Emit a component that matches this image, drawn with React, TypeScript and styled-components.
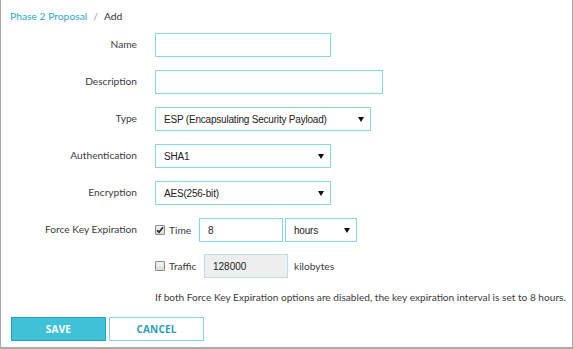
import React from "react";
import styled, { createGlobalStyle } from "styled-components";

const Global = createGlobalStyle`
  html, body { margin: 0; padding: 0; background: #fff; }
  body { width: 573px; height: 349px; overflow: hidden; }
  * { box-sizing: border-box; }
`;

const Frame = styled.div`
  width: 573px;
  height: 349px;
  border-left: 1px solid #a9a9a9;
  border-right: 1px solid #a9a9a9;
  border-bottom: 2px solid #a9a9a9;
  padding: 8px 0 0 9px;
  font-family: Lato, "Segoe UI", sans-serif;
  color: #3c3c3c;
  font-size: 10.2px;
`;

const Crumbs = styled.div`
  display: flex;
  gap: 6px;
  height: 16px;
  align-items: center;
  font-size: 10.3px;
  color: #333;
`;
const CrumbLink = styled.span`
  color: #2ea9cc;
`;
const Sep = styled.span`
  color: #999;
`;

const Form = styled.div`
  display: grid;
  grid-template-columns: 127px auto;
  column-gap: 18px;
  row-gap: 13px;
  margin-top: 9px;
  align-items: center;
`;

const Label = styled.div`
  text-align: right;
  font-size: 10.2px;
  color: #3c3c3c;
  margin-top: -2px;
`;

const Input = styled.div<{ w: number; disabled?: boolean }>`
  width: ${(p) => p.w}px;
  height: 24px;
  border: 1px solid ${(p) => (p.disabled ? "#b9dfe6" : "#86d8e6")};
  background: ${(p) => (p.disabled ? "#eeeeee" : "#fff")};
  font-family: "Liberation Sans", Arial, sans-serif;
  font-size: 10px;
  color: #222;
  display: flex;
  align-items: center;
  padding-left: 8px;
`;

const Select = styled.div<{ w: number }>`
  width: ${(p) => p.w}px;
  height: 24px;
  border: 1px solid #86d8e6;
  font-family: "Liberation Sans", Arial, sans-serif;
  font-size: 10px;
  letter-spacing: -0.2px;
  color: #222;
  display: flex;
  align-items: center;
  justify-content: space-between;
  padding: 0 6px 0 8px;
`;

const Arrow = styled.span`
  width: 0;
  height: 0;
  border-left: 3px solid transparent;
  border-right: 3px solid transparent;
  border-top: 5px solid #111;
  margin-top: 1px;
`;

const Inline = styled.div<{ shift?: number }>`
  display: flex;
  align-items: center;
  height: 24px;
  margin-top: ${(p) => p.shift ?? 0}px;
`;

const Check = styled.span`
  width: 10px;
  height: 10px;
  border: 1px solid #8a8a8a;
  background: linear-gradient(#f4f4f4, #dcdcdc);
  display: inline-flex;
  align-items: center;
  justify-content: center;
  border-radius: 1px;
`;

const CheckLabel = styled.span<{ w: number }>`
  width: ${(p) => p.w}px;
  padding-left: 4px;
  font-size: 10.2px;
  color: #3c3c3c;
`;

const Unit = styled.span`
  margin-left: 6px;
  font-size: 10.2px;
  color: #3c3c3c;
`;

const Note = styled.div`
  grid-column: 2;
  font-size: 10.15px;
  color: #3c3c3c;
  white-space: nowrap;
  margin-top: 0;
`;

const Buttons = styled.div`
  display: flex;
  gap: 3px;
  margin-top: 14px;
  margin-left: 1px;
`;

const Button = styled.div<{ primary?: boolean }>`
  width: 95px;
  height: 24px;
  display: flex;
  align-items: center;
  justify-content: center;
  font-family: "Open Sans", sans-serif;
  font-size: 10px;
  font-weight: 700;
  letter-spacing: 0.2px;
  border: 1px solid ${(p) => (p.primary ? "#1ea5c2" : "#86d8e6")};
  background: ${(p) => (p.primary ? "#3fc1d8" : "#fff")};
  color: ${(p) => (p.primary ? "#fff" : "#2a9fc0")};
`;

const CheckMark = () => (
  <svg width="8" height="8" viewBox="0 0 8 8">
    <path d="M1 4.2 L3 6.3 L7 1.2" stroke="#222" strokeWidth="1.6" fill="none" />
  </svg>
);

export default function App() {
  return (
    <>
      <Global />
      <Frame>
        <Crumbs>
          <CrumbLink>Phase 2 Proposal</CrumbLink>
          <Sep>/</Sep>
          <span>Add</span>
        </Crumbs>
        <Form>
          <Label>Name</Label>
          <Input w={176} />
          <Label>Description</Label>
          <Input w={228} />
          <Label>Type</Label>
          <Select w={216}>
            <span>ESP (Encapsulating Security Payload)</span>
            <Arrow />
          </Select>
          <Label>Authentication</Label>
          <Select w={176}>
            <span>SHA1</span>
            <Arrow />
          </Select>
          <Label>Encryption</Label>
          <Select w={176}>
            <span>AES(256-bit)</span>
            <Arrow />
          </Select>
          <Label>Force Key Expiration</Label>
          <Inline>
            <Check>
              <CheckMark />
            </Check>
            <CheckLabel w={34}>Time</CheckLabel>
            <Input w={84}>8</Input>
            <Select w={72} style={{ marginLeft: 2 }}>
              <span>hours</span>
              <Arrow />
            </Select>
          </Inline>
          <div />
          <Inline shift={-1}>
            <Check />
            <CheckLabel w={39}>Traffic</CheckLabel>
            <Input w={84} disabled>
              128000
            </Input>
            <Unit>kilobytes</Unit>
          </Inline>
          <Note>
            If both Force Key Expiration options are disabled, the key expiration interval is set to 8 hours.
          </Note>
        </Form>
        <Buttons>
          <Button primary>SAVE</Button>
          <Button>CANCEL</Button>
        </Buttons>
      </Frame>
    </>
  );
}
